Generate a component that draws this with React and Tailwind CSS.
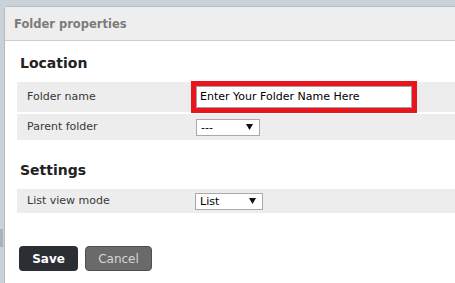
function Caret() {
  return (
    <svg width="7" height="6" viewBox="0 0 7 6" className="shrink-0">
      <polygon points="0,0 7,0 3.5,6" fill="#111" />
    </svg>
  );
}

function FakeSelect({ value, width }) {
  return (
    <div
      className="flex h-[17px] items-center justify-between border border-[#a9a9a9] bg-white pl-[4px] pr-[6px] text-[11px] leading-none text-black"
      style={{ width }}
    >
      <span>{value}</span>
      <Caret />
    </div>
  );
}

function Row({ label, children, className }) {
  return (
    <div className={"flex items-center bg-[#ededed] " + className}>
      <div className="w-[178px] shrink-0 pl-[10px] text-[11px] text-[#383838]">{label}</div>
      {children}
    </div>
  );
}

export default function App() {
  return (
    <div
      className="flex h-[283px] w-[455px] overflow-hidden bg-[#c9d1d9]"
      style={{ fontFamily: '"DejaVu Sans", Verdana, sans-serif' }}
    >
      <div className="w-[4px] shrink-0">
        <div className="mt-[229px] h-[18px] w-[3px] bg-[#aab2ba]" />
      </div>

      <div className="mt-[6px] flex-1 rounded-tl-[4px] border-l border-t border-[#b3bac2] bg-white">
        <div className="flex h-[34px] items-center border-b border-[#cdcdcd] bg-[#eeeeee] pl-[9px]">
          <span className="text-[11.5px] font-bold leading-[14px] text-[#7b7b7b]">Folder properties</span>
        </div>

        <div className="pl-[12px]">
          <h2 className="mt-[14px] mb-[10px] pl-[3px] text-[14px] font-bold leading-[17px] text-[#222]">Location</h2>

          <Row label="Folder name" className="h-[30px]">
            <div className="ml-[-4px] border-[5px] border-[#e8151f]">
              <div className="flex h-[22px] w-[216px] items-center border border-[#a3a3a3] bg-white pl-[3px] text-[11px] text-black">
                Enter Your Folder Name Here
              </div>
            </div>
          </Row>
          <Row label="Parent folder" className="mt-[2px] h-[26px]">
            <div className="ml-[1px]">
              <FakeSelect value="---" width={64} />
            </div>
          </Row>

          <h2 className="mt-[22px] mb-[10px] pl-[3px] text-[14px] font-bold leading-[17px] text-[#222]">Settings</h2>

          <Row label="List view mode" className="h-[24px]">
            <FakeSelect value="List" width={68} />
          </Row>

          <div className="mt-[33px] flex gap-[7px] pl-[2px]">
            <button className="h-[25px] w-[59px] rounded-[4px] bg-[#2b2e33] text-[12px] font-bold text-white">Save</button>
            <button className="h-[25px] w-[67px] rounded-[4px] border border-[#4f4f4f] bg-[#6a6a6a] text-[12px] text-[#d6d6d6]">Cancel</button>
          </div>
        </div>
      </div>
    </div>
  );
}
